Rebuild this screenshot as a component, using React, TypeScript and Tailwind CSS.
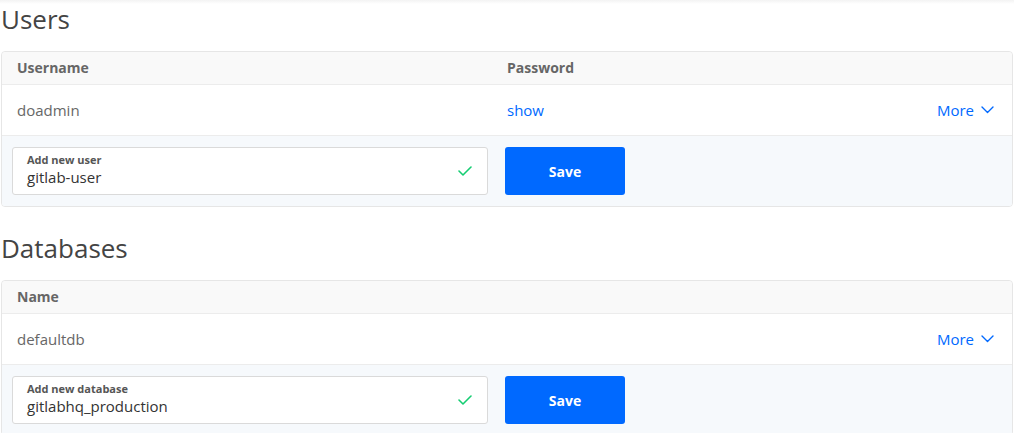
interface Column {
  label: string;
}

function Check() {
  return (
    <svg width="14" height="10" viewBox="0 0 14 10" fill="none" className="shrink-0">
      <polyline points="1,5 5,9 13,1" stroke="#15cd72" strokeWidth="1.6" strokeLinecap="round" strokeLinejoin="round" />
    </svg>
  );
}

function Chevron() {
  return (
    <svg width="13" height="8" viewBox="0 0 13 8" fill="none" className="shrink-0">
      <polyline points="1,1 6.5,6.5 12,1" stroke="#0069ff" strokeWidth="1.4" strokeLinecap="round" strokeLinejoin="round" />
    </svg>
  );
}

function AddRow({ label, value }: { label: string; value: string }) {
  return (
    <div className="flex items-center gap-[17px] bg-[#f6f9fc] px-[10px] py-[11px] rounded-b-[3px]">
      <div className="flex items-center w-[476px] h-[48px] bg-white border border-[#dadada] rounded-[3px] pl-[14px] pr-[15px]">
        <div className="flex-1 flex flex-col pb-[3px]">
          <span className="text-[11px] leading-[14px] font-bold text-[#555]">{label}</span>
          <span className="text-[15px] leading-[20px] text-[#333]">{value}</span>
        </div>
        <Check />
      </div>
      <button className="w-[120px] h-[48px] bg-[#0069ff] rounded-[3px] text-white text-[14px] font-bold">Save</button>
    </div>
  );
}

function Section({
  title,
  columns,
  cells,
  addLabel,
  addValue,
  first,
}: {
  title: string;
  columns: Column[];
  cells: React.ReactNode[];
  addLabel: string;
  addValue: string;
  first?: boolean;
}) {
  return (
    <section className={first ? '' : 'mt-[22px]'}>
      <h2 className="text-[26px] leading-[32px] text-[#444] pt-[3px] pb-[16px]">{title}</h2>
      <div className="border border-[#e6e6e6] rounded-[4px] bg-white">
        <div className="grid grid-cols-[490px_1fr] h-[33px] items-center px-[15px] pb-[2px] bg-[#f9f9f9] border-b border-[#ececec] rounded-t-[4px]">
          {columns.map((c) => (
            <span key={c.label} className="text-[14px] font-bold text-[#666]">
              {c.label}
            </span>
          ))}
        </div>
        <div className="grid grid-cols-[490px_1fr_auto] h-[51px] items-center px-[15px] pr-[18px] border-b border-[#ececec]">
          {cells}
          <span className="flex items-center gap-[7px] text-[15px] text-[#0069ff]">
            More <Chevron />
          </span>
        </div>
        <AddRow label={addLabel} value={addValue} />
      </div>
    </section>
  );
}

export default function App() {
  return (
    <div className="w-[1014px] h-[433px] overflow-hidden bg-white px-px font-['Open_Sans',sans-serif]">
      <div className="h-0 relative">
        <div className="absolute -left-px right-[-1px] top-0 h-[4px] bg-gradient-to-b from-[#f3f3f3] to-white" />
      </div>
      <Section
        first
        title="Users"
        columns={[{ label: 'Username' }, { label: 'Password' }]}
        cells={[
          <span key="u" className="text-[15px] text-[#676767]">doadmin</span>,
          <span key="p" className="text-[15px] text-[#0069ff]">show</span>,
        ]}
        addLabel="Add new user"
        addValue="gitlab-user"
      />
      <Section
        title="Databases"
        columns={[{ label: 'Name' }]}
        cells={[
          <span key="n" className="text-[15px] text-[#676767]">defaultdb</span>,
          <span key="e" />,
        ]}
        addLabel="Add new database"
        addValue="gitlabhq_production"
      />
    </div>
  );
}
